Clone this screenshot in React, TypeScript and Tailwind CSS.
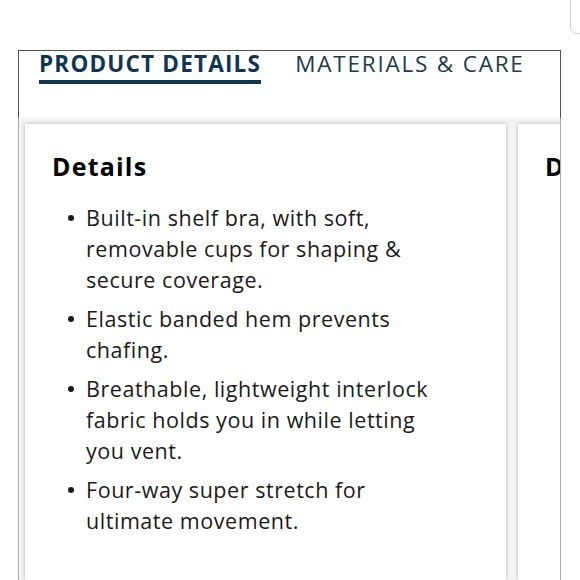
import React from 'react';

const items = [
  ['Built-in shelf bra, with soft,', 'removable cups for shaping &', 'secure coverage.'],
  ['Elastic banded hem prevents', 'chafing.'],
  ['Breathable, lightweight interlock', 'fabric holds you in while letting', 'you vent.'],
  ['Four-way super stretch for', 'ultimate movement.'],
];

const font = { fontFamily: '"Open Sans", "Liberation Sans", sans-serif' };

export default function App() {
  return (
    <div className="relative h-[580px] w-[580px] overflow-hidden bg-white" style={font}>
      {/* partial element peeking at top right */}
      <div className="absolute right-[-20px] top-[-10px] h-[44px] w-[30px] rounded-bl-[6px] border border-[#d6d6d6]" />

      <div className="ml-[18px] mt-[50px] flex h-[530px] w-[543px] flex-col border-t border-[#555]">
        {/* Tabs */}
        <div className="flex h-[67px] shrink-0 gap-[34px] border-x border-[#555] pl-[20px]">
          <div className="flex flex-col">
            <span className="-mt-[1px] text-[22.5px] font-bold leading-[28px] tracking-[1.2px] text-[#0f3455]">
              PRODUCT DETAILS
            </span>
            <div className="mt-[2px] h-[4px] w-full bg-[#0f3455]" />
          </div>
          <span className="-mt-[1px] text-[22.5px] leading-[28px] tracking-[1.8px] text-[#1c3a4b]">
            MATERIALS &amp; CARE
          </span>
        </div>

        {/* Cards */}
        <div className="flex flex-1 gap-[12px] overflow-hidden border-x border-[#a8a8a8] bg-[#f4f4f4] pl-[6px] pt-[6px]">
          <div className="w-[481px] shrink-0 bg-white px-[27px] pt-[26px] shadow-[0_0_4px_rgba(0,0,0,0.28)]">
            <h2 className="text-[25px] font-bold leading-[32px] tracking-[1.2px] text-black">Details</h2>
            <ul className="mt-[20px] flex flex-col gap-[8px]">
              {items.map((lines) => (
                <li key={lines[0]} className="flex text-[21.5px] leading-[31px] tracking-[0.55px] text-[#1a1a1a]">
                  <span className="flex h-[31px] w-[34px] shrink-0 items-center pl-[16px]">
                    <span className="h-[6px] w-[6px] rounded-full bg-[#1a1a1a]" />
                  </span>
                  <span>
                    {lines.map((l, i) => (
                      <span key={i} className="block whitespace-nowrap">
                        {l}
                      </span>
                    ))}
                  </span>
                </li>
              ))}
            </ul>
          </div>
          <div className="w-[200px] shrink-0 bg-white px-[27px] pt-[26px] shadow-[0_0_4px_rgba(0,0,0,0.28)]">
            <h2 className="text-[25px] font-bold leading-[32px] tracking-[1.2px] text-black">Details</h2>
          </div>
        </div>
      </div>
    </div>
  );
}
